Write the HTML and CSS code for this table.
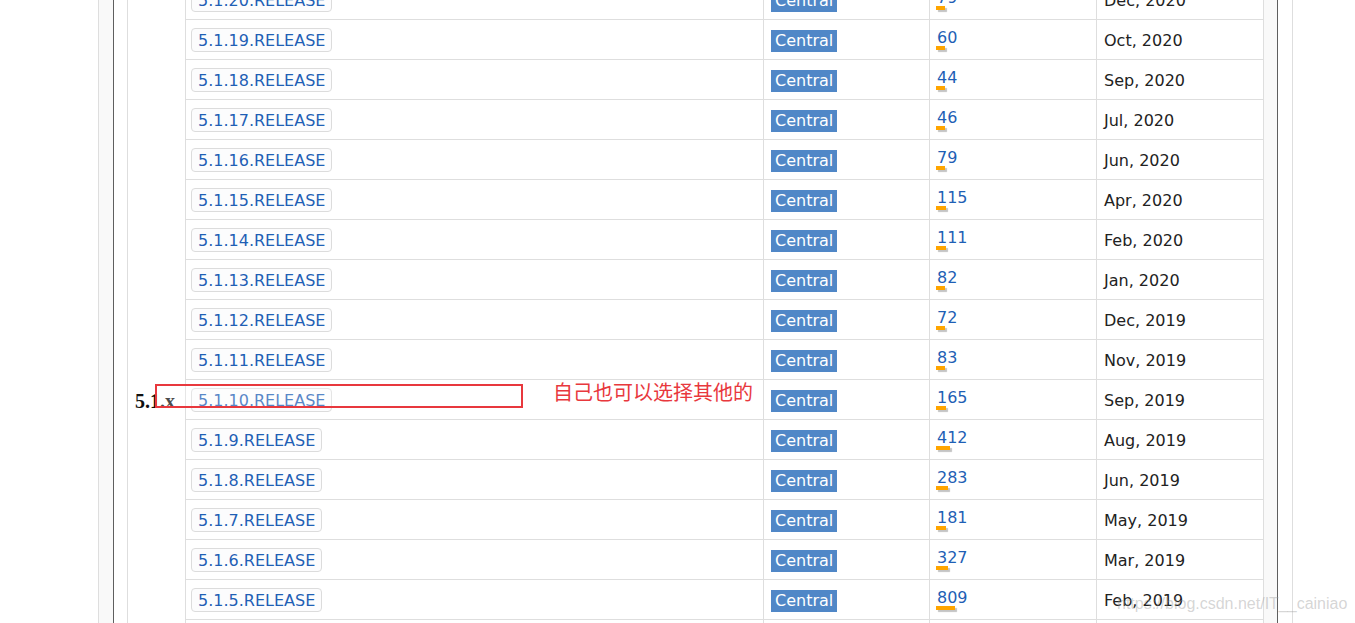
FILE: index.html
```html
<!DOCTYPE html>
<html lang="en">
<head>
<meta charset="utf-8">
<title>Versions</title>
<link rel="stylesheet" href="styles.css">
</head>
<body>
<div class="frame">
  <div class="gutter"></div>
  <div class="main">
    <div class="grid">
      <div class="group"><b>5.1.x</b></div>

      <div class="c ver"><a class="vbadge">5.1.20.RELEASE</a></div>
      <div class="c repo"><span class="central">Central</span></div>
      <div class="c use"><a class="num">79</a><span class="bar" style="width:9px"></span></div>
      <div class="c date">Dec, 2020</div>

      <div class="c ver"><a class="vbadge">5.1.19.RELEASE</a></div>
      <div class="c repo"><span class="central">Central</span></div>
      <div class="c use"><a class="num">60</a><span class="bar" style="width:9px"></span></div>
      <div class="c date">Oct, 2020</div>

      <div class="c ver"><a class="vbadge">5.1.18.RELEASE</a></div>
      <div class="c repo"><span class="central">Central</span></div>
      <div class="c use"><a class="num">44</a><span class="bar" style="width:9px"></span></div>
      <div class="c date">Sep, 2020</div>

      <div class="c ver"><a class="vbadge">5.1.17.RELEASE</a></div>
      <div class="c repo"><span class="central">Central</span></div>
      <div class="c use"><a class="num">46</a><span class="bar" style="width:9px"></span></div>
      <div class="c date">Jul, 2020</div>

      <div class="c ver"><a class="vbadge">5.1.16.RELEASE</a></div>
      <div class="c repo"><span class="central">Central</span></div>
      <div class="c use"><a class="num">79</a><span class="bar" style="width:9px"></span></div>
      <div class="c date">Jun, 2020</div>

      <div class="c ver"><a class="vbadge">5.1.15.RELEASE</a></div>
      <div class="c repo"><span class="central">Central</span></div>
      <div class="c use"><a class="num">115</a><span class="bar" style="width:10px"></span></div>
      <div class="c date">Apr, 2020</div>

      <div class="c ver"><a class="vbadge">5.1.14.RELEASE</a></div>
      <div class="c repo"><span class="central">Central</span></div>
      <div class="c use"><a class="num">111</a><span class="bar" style="width:10px"></span></div>
      <div class="c date">Feb, 2020</div>

      <div class="c ver"><a class="vbadge">5.1.13.RELEASE</a></div>
      <div class="c repo"><span class="central">Central</span></div>
      <div class="c use"><a class="num">82</a><span class="bar" style="width:9px"></span></div>
      <div class="c date">Jan, 2020</div>

      <div class="c ver"><a class="vbadge">5.1.12.RELEASE</a></div>
      <div class="c repo"><span class="central">Central</span></div>
      <div class="c use"><a class="num">72</a><span class="bar" style="width:9px"></span></div>
      <div class="c date">Dec, 2019</div>

      <div class="c ver"><a class="vbadge">5.1.11.RELEASE</a></div>
      <div class="c repo"><span class="central">Central</span></div>
      <div class="c use"><a class="num">83</a><span class="bar" style="width:9px"></span></div>
      <div class="c date">Nov, 2019</div>

      <div class="c ver"><a class="vbadge">5.1.10.RELEASE</a></div>
      <div class="c repo"><span class="central">Central</span></div>
      <div class="c use"><a class="num">165</a><span class="bar" style="width:10px"></span></div>
      <div class="c date">Sep, 2019</div>

      <div class="c ver"><a class="vbadge">5.1.9.RELEASE</a></div>
      <div class="c repo"><span class="central">Central</span></div>
      <div class="c use"><a class="num">412</a><span class="bar" style="width:14px"></span></div>
      <div class="c date">Aug, 2019</div>

      <div class="c ver"><a class="vbadge">5.1.8.RELEASE</a></div>
      <div class="c repo"><span class="central">Central</span></div>
      <div class="c use"><a class="num">283</a><span class="bar" style="width:12px"></span></div>
      <div class="c date">Jun, 2019</div>

      <div class="c ver"><a class="vbadge">5.1.7.RELEASE</a></div>
      <div class="c repo"><span class="central">Central</span></div>
      <div class="c use"><a class="num">181</a><span class="bar" style="width:10px"></span></div>
      <div class="c date">May, 2019</div>

      <div class="c ver"><a class="vbadge">5.1.6.RELEASE</a></div>
      <div class="c repo"><span class="central">Central</span></div>
      <div class="c use"><a class="num">327</a><span class="bar" style="width:12px"></span></div>
      <div class="c date">Mar, 2019</div>

      <div class="c ver"><a class="vbadge">5.1.5.RELEASE</a></div>
      <div class="c repo"><span class="central">Central</span></div>
      <div class="c use"><a class="num">809</a><span class="bar" style="width:19px"></span></div>
      <div class="c date">Feb, 2019</div>

      <div class="c ver"><a class="vbadge">5.1.4.RELEASE</a></div>
      <div class="c repo"><span class="central">Central</span></div>
      <div class="c use"><a class="num">263</a><span class="bar" style="width:12px"></span></div>
      <div class="c date">Jan, 2019</div>

      <div class="c ver"><a class="vbadge">5.1.3.RELEASE</a></div>
      <div class="c repo"><span class="central">Central</span></div>
      <div class="c use"><a class="num">180</a><span class="bar" style="width:10px"></span></div>
      <div class="c date">Nov, 2018</div>

      <div class="c ver"><a class="vbadge">5.1.2.RELEASE</a></div>
      <div class="c repo"><span class="central">Central</span></div>
      <div class="c use"><a class="num">214</a><span class="bar" style="width:11px"></span></div>
      <div class="c date">Oct, 2018</div>

      <div class="c ver"><a class="vbadge">5.1.1.RELEASE</a></div>
      <div class="c repo"><span class="central">Central</span></div>
      <div class="c use"><a class="num">120</a><span class="bar" style="width:10px"></span></div>
      <div class="c date">Oct, 2018</div>

      <div class="c ver"><a class="vbadge">5.1.0.RELEASE</a></div>
      <div class="c repo"><span class="central">Central</span></div>
      <div class="c use"><a class="num">300</a><span class="bar" style="width:12px"></span></div>
      <div class="c date">Sep, 2018</div>
    </div>
    <div class="rfill"></div>
  </div>
</div>

<div class="mark-box"></div>
<div class="mark-text">自己也可以选择其他的</div>
<div class="watermark">https://blog.csdn.net/IT__cainiao</div>
</body>
</html>
```

FILE: styles.css
```css
html, body {
  margin: 0;
  padding: 0;
  background: #fff;
}
body {
  height: 623px;
  overflow: hidden;
  position: relative;
  font-family: "DejaVu Sans", Verdana, sans-serif;
  font-size: 16px;
  color: #333;
}
.frame {
  margin-left: 98px;
  width: 1195px;
  box-sizing: border-box;
  border-left: 1px solid #dedede;
  border-right: 1px solid #dedede;
  display: flex;
  height: 623px;
}
.gutter {
  width: 14px;
  background: #f9f9f9;
}
.main {
  display: flex;
  padding-left: 13px;
  border-left: 1px solid #5f5f5f;
  border-right: 1px solid #5f5f5f;
  width: 1165px;
  box-sizing: border-box;
}
.rfill {
  width: 13px;
  background: #f9f9f9;
}
.grid {
  width: 1137px;
  box-sizing: border-box;
  margin-top: -20px;
  border-left: 1px solid #dedede;
  display: grid;
  grid-template-columns: 58px 578px 166px 167px 167px;
  grid-auto-rows: 40px;
  align-self: flex-start;
}
.group {
  grid-row: span 21;
  border-right: 1px solid #dedede;
  display: flex;
  align-items: center;
  padding-left: 7px;
  padding-top: 2px;
  font-family: "Liberation Serif", "Times New Roman", serif;
  font-size: 20px;
  color: #111;
}
.c {
  border-right: 1px solid #dedede;
  border-bottom: 1px solid #dedede;
  box-sizing: border-box;
  display: flex;
  align-items: center;
}
.ver {
  padding-left: 5px;
}
.vbadge {
  display: inline-block;
  height: 24px;
  box-sizing: border-box;
  line-height: 20px;
  padding: 2px 6px 0;
  border: 1px solid #dcdcdc;
  border-radius: 4px;
  background: #fcfcfd;
  color: #1f5fb5;
}
.repo {
  padding-left: 7px;
  padding-top: 2px;
}
.central {
  display: inline-block;
  height: 22px;
  line-height: 22px;
  padding: 0 4px;
  background: #5087c7;
  color: #fff;
}
.use {
  padding-left: 6px;
  flex-direction: column;
  align-items: flex-start;
  justify-content: center;
}
.num {
  color: #1f5fb5;
  line-height: 16px;
  margin-left: 1px;
}
.bar {
  display: block;
  height: 4px;
  background: #ffa500;
  box-shadow: 2px 2px 1px #c4c4c4;
}
.date {
  padding-left: 7px;
  padding-top: 2px;
  color: #222;
}
.mark-box {
  position: absolute;
  left: 155px;
  top: 384px;
  width: 368px;
  height: 24px;
  box-sizing: border-box;
  border: 2px solid #e8383d;
  background: rgba(255, 255, 255, 0.25);
}
.mark-text {
  position: absolute;
  left: 553px;
  top: 380px;
  font-family: "Noto Sans CJK SC", sans-serif;
  font-size: 20px;
  line-height: 24px;
  color: #e8383d;
}
.watermark {
  position: absolute;
  left: 1117px;
  top: 593px;
  font-family: "Liberation Sans", Arial, sans-serif;
  font-size: 16px;
  line-height: 22px;
  color: rgba(150, 150, 150, 0.4);
}
```
